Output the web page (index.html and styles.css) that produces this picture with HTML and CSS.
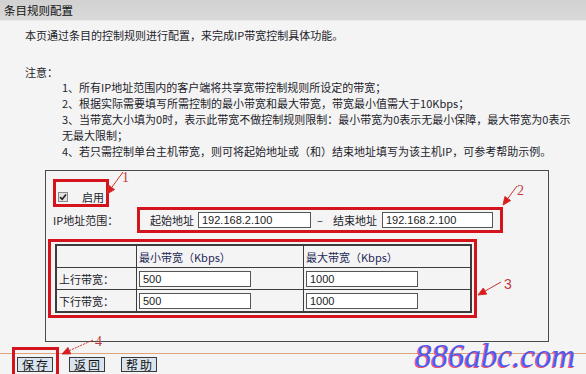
FILE: index.html
```html
<!DOCTYPE html>
<html lang="zh-CN">

<head>
    <meta charset="UTF-8">
    <title>条目规则配置</title>
    <link rel="stylesheet" href="styles.css">
</head>

<body>
    <div class="titlebar">条目规则配置</div>

    <p class="intro">本页通过条目的控制规则进行配置，来完成IP带宽控制具体功能。</p>

    <p class="note-title">注意：</p>
    <ul class="note-list">
        <li>1、所有IP地址范围内的客户端将共享宽带控制规则所设定的带宽；</li>
        <li>2、根据实际需要填写所需控制的最小带宽和最大带宽，带宽最小值需大于10Kbps；</li>
        <li>3、当带宽大小填为0时，表示此带宽不做控制规则限制：最小带宽为0表示无最小保障，最大带宽为0表示<br>无最大限制；</li>
        <li>4、若只需控制单台主机带宽，则可将起始地址或（和）结束地址填写为该主机IP，可参考帮助示例。</li>
    </ul>

    <div class="panel">
        <label class="enable">
            <span class="chk">
                <svg width="8" height="8" viewBox="0 0 8 8"><path d="M1 4.2 L3.2 6.3 L7 1.5" fill="none" stroke="#222" stroke-width="1.6"/></svg>
            </span>
            启用
        </label>

        <div class="ip-row">
            <span class="ip-label">IP地址范围：</span>
            <span>起始地址</span>
            <input class="field ip-start" type="text" value="192.168.2.100">
            <span class="dash">–</span>
            <span>结束地址</span>
            <input class="field ip-end" type="text" value="192.168.2.100">
        </div>

        <table class="bw-table">
            <tr class="head">
                <td class="c-label"></td>
                <td class="c-val">最小带宽（Kbps）</td>
                <td class="c-val">最大带宽（Kbps）</td>
            </tr>
            <tr>
                <td class="c-label">上行带宽：</td>
                <td><input class="field" type="text" value="500"></td>
                <td><input class="field" type="text" value="1000"></td>
            </tr>
            <tr>
                <td class="c-label">下行带宽：</td>
                <td><input class="field" type="text" value="500"></td>
                <td><input class="field" type="text" value="1000"></td>
            </tr>
        </table>
    </div>

    <div class="footer">
        <button class="btn">保存</button>
        <button class="btn">返回</button>
        <button class="btn">帮助</button>
    </div>

    <!-- annotations drawn over the screenshot -->
    <svg class="marks" width="586" height="374" viewBox="0 0 586 374">
        <g fill="none" stroke="#d3141c" stroke-width="3">
            <rect x="54.5" y="180.5" width="53" height="25"/>
            <rect x="138.5" y="208.5" width="363" height="23"/>
            <rect x="49.5" y="240.5" width="426" height="76"/>
            <rect x="13.5" y="348.5" width="44" height="30"/>
        </g>
        <g stroke="#cc3030" stroke-width="1" fill="#dd1a1a">
            <line x1="123" y1="172" x2="111.7" y2="187.5"/>
            <polygon points="107,194 114.5,189.6 108.9,185.4"/>
            <line x1="517" y1="186" x2="507.7" y2="198.6"/>
            <polygon points="503,205 510.6,200.6 504.9,196.5"/>
            <line x1="501" y1="282" x2="485" y2="291.1"/>
            <polygon points="478,295 486.7,294.1 483.3,288"/>
            <line x1="93" y1="340" x2="69.3" y2="350.7" stroke-dasharray="2 1"/>
            <polygon points="62,354 70.7,353.9 67.9,347.5"/>
        </g>
        <g fill="#c23a3a">
            <text x="122" y="182" class="num-serif">1</text>
            <text x="517" y="195" class="num-serif">2</text>
            <text x="504" y="289" class="num-sans">3</text>
            <text x="95" y="346" class="num-serif">4</text>
        </g>
    </svg>

    <div class="watermark">886abc.com</div>
</body>

</html>
```

FILE: styles.css
```css
body {
    margin: 0;
    width: 586px;
    height: 374px;
    overflow: hidden;
    position: relative;
    background-color: #f4f4f4;
    font-family: "Noto Sans CJK SC", sans-serif;
    font-size: 11px;
    color: #1d1d2b;
}

p {
    margin: 0;
}

.titlebar {
    height: 20px;
    line-height: 20px;
    padding-left: 4px;
    font-size: 11.5px;
    color: #111;
    background: linear-gradient(#d1d1d1, #d9d9d9);
    border-bottom: 1px solid #e9e9e9;
}

.intro {
    margin: 6px 0 0 25px;
    line-height: 16px;
}

.note-title {
    margin: 22px 0 0 25px;
    line-height: 14px;
}

.note-list {
    margin: 0 0 0 62px;
    padding: 0;
    list-style: none;
    line-height: 16px;
}

.panel {
    box-sizing: border-box;
    width: 504px;
    height: 172px;
    margin: 11px 0 0 45px;
    padding: 18px 0 0 7px;
    border: 1px solid #4a4a4a;
}

.enable {
    display: flex;
    align-items: center;
    height: 16px;
    padding-left: 5px;
    gap: 14px;
}

.chk {
    box-sizing: border-box;
    width: 10px;
    height: 10px;
    border: 1px solid #8a8a8a;
    background-color: #e2e2e2;
    display: flex;
    align-items: center;
    justify-content: center;
}

.ip-row {
    display: flex;
    align-items: center;
    height: 16px;
    margin-top: 7px;
}

.ip-label {
    width: 97px;
}

.field {
    box-sizing: border-box;
    width: 112px;
    height: 16px;
    margin: 0;
    padding: 0 3px;
    border: 1px solid #555;
    background-color: #fff;
    font-family: "Liberation Sans", Arial, sans-serif;
    font-size: 11px;
    color: #222;
}

.ip-start {
    width: 113px;
    margin-left: 4px;
}

.dash {
    margin: 0 10px 0 6px;
}

.ip-end {
    width: 111px;
    margin-left: 5px;
}

.bw-table {
    margin: 16px 0 0 2px;
    border-collapse: collapse;
    border: 2px solid #3c3c3c;
    table-layout: fixed;
    width: 414px;
}

.bw-table td {
    border: 1px solid #3c3c3c;
    height: 21px;
    padding: 0 0 0 2px;
}

.bw-table .head td {
    color: #1e2a55;
}

.bw-table .c-label {
    width: 77px;
}

.bw-table .c-val {
    width: 164px;
}

.footer {
    margin-top: 11px;
    border-top: 1px solid #e0a47a;
    padding: 3px 0 0 17px;
    display: flex;
    gap: 16px;
}

.btn {
    box-sizing: border-box;
    width: 36px;
    height: 15px;
    padding: 0 0 0 2px;
    border: 1px solid #3a3a3a;
    background-color: #d9e4ee;
    font-family: "Noto Sans CJK SC", sans-serif;
    font-size: 12px;
    line-height: 13px;
    letter-spacing: 2px;
    color: #111;
}

.marks {
    position: absolute;
    left: 0;
    top: 0;
    pointer-events: none;
}

.num-serif {
    font-family: "Liberation Serif", serif;
    font-size: 14px;
}

.num-sans {
    font-family: "Liberation Sans", sans-serif;
    font-size: 14px;
}

.watermark {
    position: absolute;
    left: 415px;
    top: 340px;
    font-family: "Liberation Serif", serif;
    font-style: italic;
    font-size: 33px;
    line-height: 33px;
    color: #4b5cf0;
    text-shadow: -1px 1px 0 #f0506e;
}
```
